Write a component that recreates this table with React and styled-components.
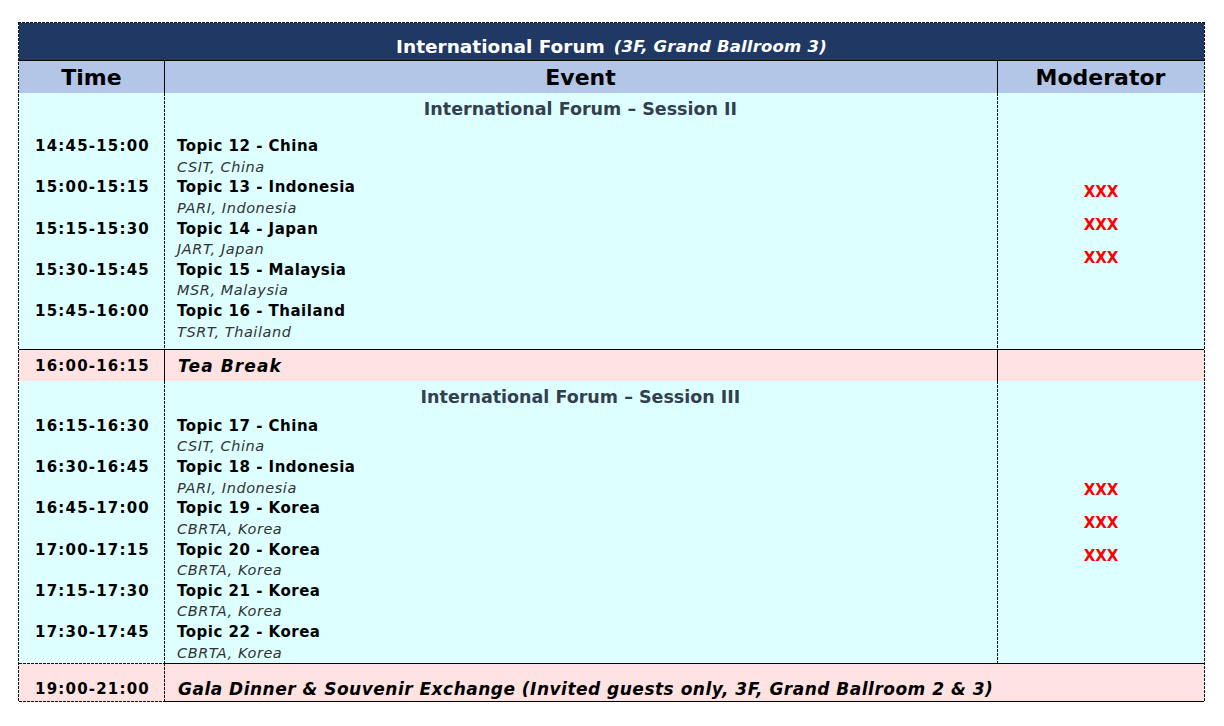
import React from "react"
import styled, { createGlobalStyle } from "styled-components"

const navy = "#203864"
const headerBlue = "#b4c6e7"
const cyan = "#ddffff"
const pink = "#ffe3e3"

// spreadsheet style lines, drawn as background layers so the dashes stay tight
const edge = (side, kind) => {
  if (!kind) return null
  const vertical = side === "left" || side === "right"
  const img =
    kind === "solid"
      ? "linear-gradient(#000, #000)"
      : `repeating-linear-gradient(${vertical ? "to bottom" : "to right"}, #111 0 3px, transparent 3px 4px)`
  const pos = {
    left: "left top",
    right: "right top",
    top: "left top",
    bottom: "left bottom",
  }[side]
  const size = vertical ? "1px 100%" : "100% 1px"
  return `${img} ${pos} / ${size} no-repeat`
}

const paint = (p) =>
  [
    edge("left", p.$left),
    edge("right", p.$right),
    edge("top", p.$top),
    edge("bottom", p.$bottom),
    p.$bg,
  ]
    .filter(Boolean)
    .join(", ")

const GlobalStyle = createGlobalStyle`
  body {
    margin: 0;
    background: #fff;
    font-family: "DejaVu Sans", "Liberation Sans", sans-serif;
    color: #000;
  }
`

const Page = styled.div`
  padding: 22px 0 0 18px;
`

const Table = styled.div`
  width: 1187px;
  box-sizing: border-box;
  padding: 1px 1px 0 1px;
  background: ${paint};
`

const TitleBar = styled.div`
  height: 38px;
  box-sizing: border-box;
  background: ${navy};
  border-bottom: 1px solid #000;
  display: flex;
  align-items: center;
  justify-content: center;
  gap: 9px;
  color: #fff;
  font-weight: bold;
  font-size: 18.5px;
  padding: 9px 0 0 0;
`

const TitleNote = styled.span`
  font-style: italic;
  font-size: 16.5px;
  letter-spacing: 0.2px;
`

const HeaderRow = styled.div`
  display: grid;
  grid-template-columns: 145px 833px 207px;
  height: 32px;
`

const HeadCell = styled.div`
  background: ${paint};
  display: flex;
  align-items: center;
  justify-content: center;
  font-size: 22px;
  font-weight: bold;
  padding-top: 1px;
`

const Block = styled.div`
  display: flex;
  height: ${(p) => p.$h}px;
  background: ${cyan};
`

const Schedule = styled.div`
  display: grid;
  grid-template-columns: 145px 833px;
  grid-auto-rows: min-content;
  align-content: start;
  background: ${edge("left", "dash").replace("left top", "145px top")};
`

const SessionTitle = styled.div`
  grid-column: 2;
  height: 32px;
  display: flex;
  align-items: center;
  justify-content: center;
  font-size: 17.5px;
  font-weight: bold;
  color: #333f50;
  margin-bottom: ${(p) => p.$gap}px;
`

const Time = styled.div`
  grid-column: 1;
  height: 41.3px;
  padding-top: 1px;
  box-sizing: border-box;
  line-height: 20.6px;
  text-align: center;
  font-size: 15px;
  font-weight: bold;
  letter-spacing: 1.2px;
  padding-left: 2px;
`

const Topic = styled.div`
  grid-column: 2;
  height: 41.3px;
  padding: 1px 0 0 13px;
  box-sizing: border-box;
`

const TopicName = styled.div`
  font-size: 15px;
  font-weight: bold;
  letter-spacing: 0.5px;
  line-height: 20.6px;
`

const Speaker = styled.div`
  font-size: 14.5px;
  font-style: italic;
  letter-spacing: 0.55px;
  color: #333;
  line-height: 20.7px;
`

const ModCell = styled.div`
  width: 207px;
  background: ${edge("left", "dash")}, ${cyan};
  display: flex;
  flex-direction: column;
  justify-content: center;
  align-items: center;
  padding-top: ${(p) => p.$shift}px;
  box-sizing: border-box;
`

const Moderator = styled.div`
  color: #ff0000;
  font-weight: bold;
  font-size: 15px;
  line-height: 33px;
  padding-left: 1px;
`

const BreakRow = styled.div`
  display: grid;
  grid-template-columns: ${(p) => (p.$wide ? "145px 1040px" : "145px 833px 207px")};
  height: ${(p) => p.$h}px;
`

const BreakCell = styled.div`
  background: ${paint};
  display: flex;
  align-items: center;
  justify-content: ${(p) => (p.$center ? "center" : "flex-start")};
  padding: ${(p) => (p.$center ? "0 0 0 2px" : "0 0 0 14px")};
  padding-top: ${(p) => p.$dy || 0}px;
  font-size: ${(p) => (p.$center ? "15px" : "17px")};
  font-weight: bold;
  font-style: ${(p) => (p.$center ? "normal" : "italic")};
  letter-spacing: ${(p) => (p.$center ? "1.2px" : `${p.$spacing || 0.5}px`)};
`

const sessions = [
  {
    title: "International Forum \u2013 Session II",
    h: 256,
    gap: 10,
    shift: 8,
    talks: [
      ["14:45-15:00", "Topic 12 - China", "CSIT, China"],
      ["15:00-15:15", "Topic 13 - Indonesia", "PARI, Indonesia"],
      ["15:15-15:30", "Topic 14 - Japan", "JART, Japan"],
      ["15:30-15:45", "Topic 15 - Malaysia", "MSR, Malaysia"],
      ["15:45-16:00", "Topic 16 - Thailand", "TSRT, Thailand"],
    ],
  },
  {
    title: "International Forum \u2013 Session III",
    h: 282,
    gap: 1.7,
    shift: 2,
    talks: [
      ["16:15-16:30", "Topic 17 - China", "CSIT, China"],
      ["16:30-16:45", "Topic 18 - Indonesia", "PARI, Indonesia"],
      ["16:45-17:00", "Topic 19 - Korea", "CBRTA, Korea"],
      ["17:00-17:15", "Topic 20 - Korea", "CBRTA, Korea"],
      ["17:15-17:30", "Topic 21 - Korea", "CBRTA, Korea"],
      ["17:30-17:45", "Topic 22 - Korea", "CBRTA, Korea"],
    ],
  },
]

const Session = ({ session }) => (
  <Block $h={session.h}>
    <Schedule>
      <SessionTitle $gap={session.gap}>{session.title}</SessionTitle>
      {session.talks.map(([time, topic, speaker]) => (
        <React.Fragment key={time}>
          <Time>{time}</Time>
          <Topic>
            <TopicName>{topic}</TopicName>
            <Speaker>{speaker}</Speaker>
          </Topic>
        </React.Fragment>
      ))}
    </Schedule>
    <ModCell $shift={session.shift}>
      <Moderator>XXX</Moderator>
      <Moderator>XXX</Moderator>
      <Moderator>XXX</Moderator>
    </ModCell>
  </Block>
)

const App = () => (
  <Page>
    <GlobalStyle />
    <Table $left="dash" $right="dash" $top="dash" $bg="#fff">
      <TitleBar>
        International Forum
        <TitleNote>(3F, Grand Ballroom 3)</TitleNote>
      </TitleBar>
      <HeaderRow>
        <HeadCell $bg={headerBlue}>Time</HeadCell>
        <HeadCell $bg={headerBlue} $left="solid">
          Event
        </HeadCell>
        <HeadCell $bg={headerBlue} $left="solid">
          Moderator
        </HeadCell>
      </HeaderRow>

      <Session session={sessions[0]} />

      <BreakRow $h={32}>
        <BreakCell $center $bg={pink} $top="solid" $dy={1}>
          16:00-16:15
        </BreakCell>
        <BreakCell $bg={pink} $top="solid" $left="solid" $dy={1} $spacing={1.1}>
          Tea Break
        </BreakCell>
        <BreakCell $bg={pink} $top="solid" $left="solid" />
      </BreakRow>

      <Session session={sessions[1]} />

      <BreakRow $wide $h={39}>
        <BreakCell $center $bg={pink} $top="dash" $bottom="dash" $dy={12}>
          19:00-21:00
        </BreakCell>
        <BreakCell $bg={pink} $top="solid" $bottom="solid" $left="dash" $dy={12} $spacing={0.49}>
          Gala Dinner &amp; Souvenir Exchange (Invited guests only, 3F, Grand
          Ballroom 2 &amp; 3)
        </BreakCell>
      </BreakRow>
    </Table>
  </Page>
)

export default App
